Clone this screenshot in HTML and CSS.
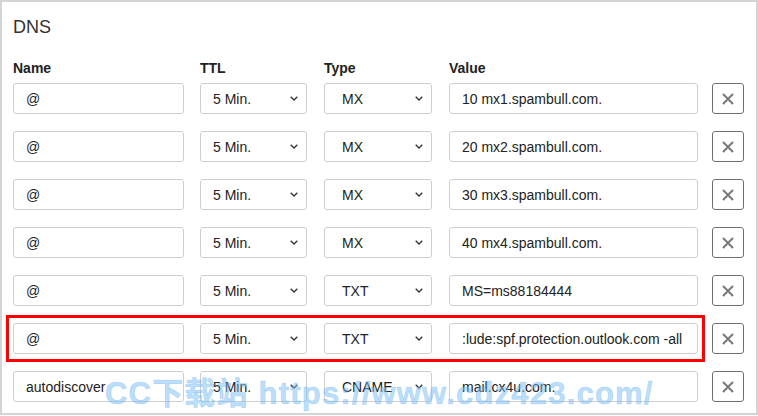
FILE: index.html
```html
<!DOCTYPE html>
<html>
<head>
<meta charset="utf-8">
<link rel="stylesheet" href="styles.css">
</head>
<body>
<div class="card">
  <h2 class="title">DNS</h2>
  <div class="grid">
    <div class="row labels">
      <div class="lbl">Name</div>
      <div class="lbl">TTL</div>
      <div class="lbl">Type</div>
      <div class="lbl">Value</div>
      <div></div>
    </div>
    <div class="row">
      <div><input class="field f-name" value="@"></div>
      <div><select class="field f-ttl"><option>5 Min.</option></select></div>
      <div><select class="field f-type"><option>MX</option></select></div>
      <div><input class="field f-value" value="10 mx1.spambull.com."></div>
      <div><button class="del"><svg viewBox="0 0 12 12" width="12" height="12"><path d="M1 1L11 11M11 1L1 11" stroke="#777" stroke-width="2" fill="none"/></svg></button></div>
    </div>
    <div class="row">
      <div><input class="field f-name" value="@"></div>
      <div><select class="field f-ttl"><option>5 Min.</option></select></div>
      <div><select class="field f-type"><option>MX</option></select></div>
      <div><input class="field f-value" value="20 mx2.spambull.com."></div>
      <div><button class="del"><svg viewBox="0 0 12 12" width="12" height="12"><path d="M1 1L11 11M11 1L1 11" stroke="#777" stroke-width="2" fill="none"/></svg></button></div>
    </div>
    <div class="row">
      <div><input class="field f-name" value="@"></div>
      <div><select class="field f-ttl"><option>5 Min.</option></select></div>
      <div><select class="field f-type"><option>MX</option></select></div>
      <div><input class="field f-value" value="30 mx3.spambull.com."></div>
      <div><button class="del"><svg viewBox="0 0 12 12" width="12" height="12"><path d="M1 1L11 11M11 1L1 11" stroke="#777" stroke-width="2" fill="none"/></svg></button></div>
    </div>
    <div class="row">
      <div><input class="field f-name" value="@"></div>
      <div><select class="field f-ttl"><option>5 Min.</option></select></div>
      <div><select class="field f-type"><option>MX</option></select></div>
      <div><input class="field f-value" value="40 mx4.spambull.com."></div>
      <div><button class="del"><svg viewBox="0 0 12 12" width="12" height="12"><path d="M1 1L11 11M11 1L1 11" stroke="#777" stroke-width="2" fill="none"/></svg></button></div>
    </div>
    <div class="row">
      <div><input class="field f-name" value="@"></div>
      <div><select class="field f-ttl"><option>5 Min.</option></select></div>
      <div><select class="field f-type"><option>TXT</option></select></div>
      <div><input class="field f-value" value="MS=ms88184444"></div>
      <div><button class="del"><svg viewBox="0 0 12 12" width="12" height="12"><path d="M1 1L11 11M11 1L1 11" stroke="#777" stroke-width="2" fill="none"/></svg></button></div>
    </div>
    <div class="row hl">
      <div><input class="field f-name" value="@"></div>
      <div><select class="field f-ttl"><option>5 Min.</option></select></div>
      <div><select class="field f-type"><option>TXT</option></select></div>
      <div><input class="field f-value" value=":lude:spf.protection.outlook.com -all"></div>
      <div><button class="del"><svg viewBox="0 0 12 12" width="12" height="12"><path d="M1 1L11 11M11 1L1 11" stroke="#777" stroke-width="2" fill="none"/></svg></button></div>
    </div>
    <div class="row">
      <div><input class="field f-name" value="autodiscover"></div>
      <div><select class="field f-ttl"><option>5 Min.</option></select></div>
      <div><select class="field f-type"><option>CNAME</option></select></div>
      <div><input class="field f-value" value="mail.cx4u.com."></div>
      <div><button class="del"><svg viewBox="0 0 12 12" width="12" height="12"><path d="M1 1L11 11M11 1L1 11" stroke="#777" stroke-width="2" fill="none"/></svg></button></div>
    </div>
  </div>
  <div class="watermark">CC下载站 https://www.cdz423.com/</div>
</div>
</body>
</html>
```
FILE: styles.css
```css
html, body {
  margin: 0;
  padding: 0;
  background: #fff;
}
body {
  font-family: "Liberation Sans", Arial, sans-serif;
  color: #222;
}
.card {
  position: relative;
  box-sizing: border-box;
  width: 758px;
  height: 415px;
  border: 2px solid #d4d4d4;
  padding: 14px 11px 0 11px;
  overflow: hidden;
}
.title {
  margin: 0;
  font-size: 18px;
  line-height: 22px;
  font-weight: normal;
  color: #333;
}
.grid {
  margin-top: 22px;
  display: flex;
  flex-direction: column;
  gap: 17px;
}
.row {
  position: relative;
  display: grid;
  grid-template-columns: 187px 124px 125px 263px 32px;
}
.labels {
  margin-bottom: -11px;
}
.lbl {
  font-size: 14px;
  line-height: 17px;
  font-weight: bold;
  color: #222;
}
.field {
  box-sizing: border-box;
  height: 31px;
  border: 1px solid #cfcfcf;
  border-radius: 3px;
  background: #fff;
  font-family: "Liberation Sans", Arial, sans-serif;
  font-size: 14px;
  color: #222;
  padding: 0 12px;
  margin: 0;
  outline: none;
}
.f-name { width: 171px; }
.f-value { width: 249px; }
select.field {
  -webkit-appearance: none;
  appearance: none;
  background-image: url("data:image/svg+xml;utf8,<svg xmlns='http://www.w3.org/2000/svg' width='8' height='5' viewBox='0 0 8 5'><path d='M0.7 0.7L4 4L7.3 0.7' stroke='%23333' stroke-width='1.3' fill='none'/></svg>");
  background-repeat: no-repeat;
  background-position: right 8px center;
}
.f-ttl { width: 107px; padding-left: 12px; }
.f-type { width: 108px; padding-left: 17px; }
.del {
  box-sizing: border-box;
  width: 32px;
  height: 31px;
  border: 1px solid #6f6f6f;
  border-radius: 3px;
  background: #fff;
  padding: 0;
  margin: 0;
  display: flex;
  align-items: center;
  justify-content: center;
}
.hl::after {
  content: "";
  position: absolute;
  left: -7px;
  top: -8px;
  width: 699px;
  height: 47px;
  box-sizing: border-box;
  border: 3px solid #f00;
  pointer-events: none;
}
.watermark {
  position: absolute;
  left: 103px;
  top: 366px;
  font-family: "Liberation Sans", "Noto Sans CJK SC", sans-serif;
  font-size: 31px;
  font-weight: bold;
  letter-spacing: 1.2px;
  color: rgba(120, 190, 245, 0.5);
  -webkit-text-stroke: 0.6px rgba(80, 160, 235, 0.35);
  white-space: nowrap;
  pointer-events: none;
}
```
